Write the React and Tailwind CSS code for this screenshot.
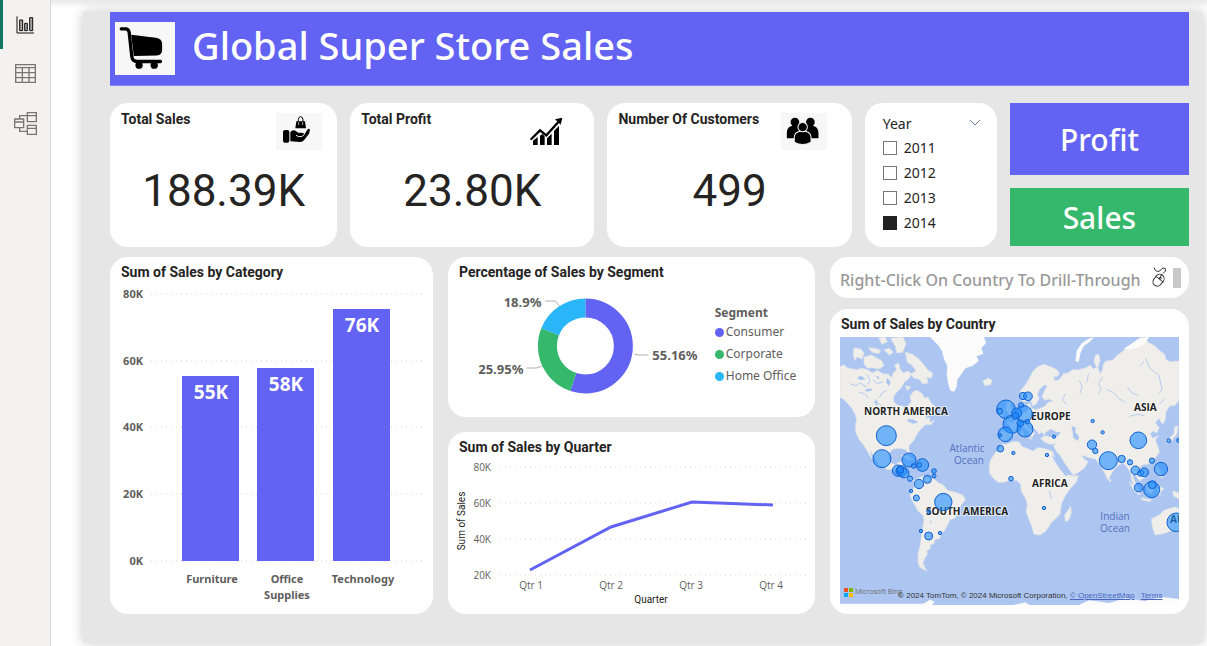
import React, { useState } from "react";

const comic = "font-['Noto_Sans',sans-serif]";
const din = "font-['Roboto',sans-serif]";

function ReportIcon() {
  return (
    <svg viewBox="0 0 54 54" className="h-[18px] w-[18px]" fill="#a3a3a3" stroke="#111" strokeWidth="3" aria-hidden="true">
      <path d="M3 1V51H54" fill="none" />
      <path d="M11 12h9v32h-9zM26 22h8v22h-8zM41 5h9v39h-9z" />
    </svg>
  );
}

function TableIcon() {
  return (
    <svg viewBox="0 0 63 57" className="h-[19px] w-[21px]" fill="none" stroke="#777" strokeWidth="4" aria-hidden="true">
      <path d="M2 2H61V55H2ZM2 11H61M2 26H61M2 41H61M22 11V55M42 11V55" />
    </svg>
  );
}

function ModelIcon() {
  return (
    <svg viewBox="0 0 69 69" className="h-[23px] w-[23px]" fill="none" stroke="#777" strokeWidth="4" aria-hidden="true">
      <path d="M40 2H67V29H40ZM40 11H67M40 40H67V67H40ZM40 49H67M2 21H29V47H2ZM2 30H29M17 20V11H40M17 48V58H40" />
    </svg>
  );
}

function CartIcon() {
  return (
    <svg viewBox="0 0 182 159" className="h-[53px] w-[60px] bg-[#f7f7f7]" role="img" aria-label="Shopping cart">
      <path d="M19 20H32Q41 20 43 31L51 104Q53 119 67 119H138" fill="none" stroke="#000" strokeWidth="10" strokeLinecap="round" />
      <path d="M49 38L124 47Q143 50 143 66V84Q143 99 127 101L57 102Z" />
      <circle cx="73" cy="130" r="11" />
      <circle cx="119" cy="130" r="11" />
    </svg>
  );
}

function HandBagIcon() {
  return (
    <svg viewBox="0 0 138 111" className="h-[37px] w-[46px] bg-[#f7f7f7]" aria-hidden="true">
      <rect x="21" y="51" width="19" height="38" rx="6" />
      <path d="M43 58Q49 49 58 53L67 59H78Q88 61 84 67L94 50Q99 44 102 51L99 62L84 82Q80 87 72 87L43 85Z" />
      <path d="M61 25H87L90 46H58Z" />
      <path d="M67 32V20Q68 11 74 11Q80 11 81 20V32" fill="none" stroke="#000" strokeWidth="3" />
      <path d="M68 27V36M80 27V36" stroke="#f7f7f7" strokeWidth="2" />
      <path d="M60 67L68 71Q78 73 85 65" fill="none" stroke="#f7f7f7" strokeWidth="3" />
    </svg>
  );
}

function GrowthIcon() {
  return (
    <svg viewBox="-22 -14 138 111" className="h-[37px] w-[46px]" aria-hidden="true">
      <path d="M8 69L22 58V82H8ZM29 54L36 49L43 56V82H29ZM50 62L64 48V82H50ZM71 40L86 24V82H71Z" />
      <path d="M3 64L29 38L48 53L82 15" fill="none" stroke="#000" strokeWidth="7" strokeLinecap="round" />
      <path d="M96 0L74 5L91 21Z" />
    </svg>
  );
}

function PeopleIcon() {
  return (
    <svg viewBox="0 0 136 110" className="h-[37px] w-[46px] bg-[#f7f7f7]" aria-hidden="true">
      <circle cx="41" cy="27" r="13" />
      <circle cx="87" cy="27" r="13" />
      <path d="M17 75V58Q18 40 34 38H52L60 75ZM111 75V58Q109 40 94 38H76L68 75Z" />
      <g stroke="#f7f7f7" strokeWidth="3">
        <path d="M39 87V72Q40 58 54 55H74Q88 58 89 72V87Q77 94 64 94Q51 94 39 87Z" />
        <circle cx="64" cy="42" r="14" />
      </g>
    </svg>
  );
}

function MouseIcon() {
  return (
    <svg viewBox="0 0 48 62" className="h-[21px] w-4 shrink-0" fill="none" stroke="#333" strokeWidth="3" aria-hidden="true">
      <path d="M9 1Q12 13 20 13Q28 13 31 6Q36 0 43 4Q47 12 36 19" />
      <rect x="9" y="20" width="26" height="38" rx="13" transform="rotate(38 22 40)" />
      <path d="M14 27L37 45M32 22L25 36" />
      <circle cx="28" cy="33" r="3" />
    </svg>
  );
}

function Card({ title, children, className = "" }) {
  return (
    <section className={`min-w-0 overflow-hidden rounded-[18px] bg-white ${className}`}>
      <h2 className={`px-[11px] pt-[5px] pb-px text-sm leading-5 font-bold text-[#252423] ${din}`}>{title}</h2>
      {children}
    </section>
  );
}

function Kpi({ title, value, icon, inset }) {
  return (
    <section className={`min-w-0 rounded-[18px] bg-white ${din}`}>
      <div className="flex h-[60px] items-start justify-between">
        <h2 className="pt-1.5 pl-[11px] text-sm leading-5 font-bold whitespace-nowrap text-[#252423]">{title}</h2>
        <div className={`pt-2.5 ${inset}`}>{icon}</div>
      </div>
      <p className="text-center text-[44px] leading-[56px] text-[#252423]">{value}</p>
    </section>
  );
}

function YearFilter() {
  const [year, setYear] = useState("2014");
  return (
    <fieldset className={`min-w-0 rounded-[18px] bg-white pt-2.5 pr-4 pl-[18px] text-[#252423] ${comic}`}>
      <div className="flex h-[22px] items-center justify-between text-sm">
        <span>Year</span>
        <button type="button" aria-label="Year options" className="pb-1">
          <svg viewBox="0 0 12 7" className="h-[7px] w-3" fill="none" stroke="#6b7fa3" aria-hidden="true">
            <path d="M1 1L6 6L11 1" />
          </svg>
        </button>
      </div>
      {["2011", "2012", "2013", "2014"].map((y) => (
        <label key={y} className="flex h-[25px] items-center gap-[7px] text-sm">
          <input
            type="checkbox"
            checked={year === y}
            onChange={() => setYear(y)}
            className="h-3.5 w-3.5 appearance-none border border-[#777] bg-white checked:border-[#222] checked:bg-[#222]"
          />
          {y}
        </label>
      ))}
    </fieldset>
  );
}

const bars = [
  { x: 72, top: 91, value: "55K", label: ["Furniture"] },
  { x: 147, top: 83, value: "58K", label: ["Office", "Supplies"] },
  { x: 223, top: 24, value: "76K", label: ["Technology"] },
];

function CategoryChart() {
  return (
    <svg viewBox="0 0 323 329" className={`mt-0.5 block w-full ${comic}`} role="img" aria-label="Sum of sales by category">
      {["80K", "60K", "40K", "20K", "0K"].map((t, i) => {
        const y = [9, 76, 142, 209, 276][i];
        return (
          <g key={t}>
            <path d={`M41 ${y}H313`} stroke="#d4d4d4" strokeDasharray="1 4" />
            <text x="33" y={y + 4} textAnchor="end" className="text-[11px] font-bold" fill="#605e5c">{t}</text>
          </g>
        );
      })}
      {bars.map((b) => (
        <g key={b.value}>
          <rect x={b.x} y={b.top} width="57" height={276 - b.top} fill="#6262f3" />
          <text x={b.x + 29} y={b.top + 23} textAnchor="middle" className="text-[19px] font-bold" fill="#fff">{b.value}</text>
          {b.label.map((line, i) => (
            <text key={line} x={b.x + 30} y={298 + i * 16} textAnchor="middle" className="text-[11px] font-bold" fill="#605e5c">{line}</text>
          ))}
        </g>
      ))}
    </svg>
  );
}

function SegmentChart() {
  const segments = [
    ["#6262f3", "Consumer"],
    ["#35b86b", "Corporate"],
    ["#29b6f9", "Home Office"],
  ];
  return (
    <div className={`mt-0.5 flex h-[132px] text-[#605e5c] ${comic}`}>
      <svg viewBox="0 0 266 132" className="block h-full min-w-0 flex-[266]" role="img" aria-label="Percentage of sales by segment">
        <g fill="none" strokeWidth="19" transform="rotate(-90 137 61)">
          <circle cx="137" cy="61" r="38" pathLength="100" stroke="#6262f3" strokeDasharray="55.16 44.84" />
          <circle cx="137" cy="61" r="38" pathLength="100" stroke="#35b86b" strokeDasharray="25.95 74.05" strokeDashoffset="-55.16" />
          <circle cx="137" cy="61" r="38" pathLength="100" stroke="#29b6f9" strokeDasharray="18.89 81.11" strokeDashoffset="-81.11" />
        </g>
        <path d="M97 16H107L111 21M78 83H88L94 81M186 69L190 70H200" fill="none" stroke="#b3b0ad" />
        <g className="text-[13px] font-bold" fill="#605e5c">
          <text x="93" y="22" textAnchor="end">18.9%</text>
          <text x="75" y="89" textAnchor="end">25.95%</text>
          <text x="204" y="75">55.16%</text>
        </g>
      </svg>
      <div className="min-w-0 flex-[100] pt-[18px] text-xs whitespace-nowrap">
        <p className="h-[18px] leading-5 font-bold">Segment</p>
        <ul>
          {segments.map(([color, name]) => (
            <li key={name} className="flex h-[22px] items-center gap-0.5 leading-5">
              <svg viewBox="0 0 10 10" className="h-[9px] w-[9px] shrink-0" aria-hidden="true">
                <circle cx="5" cy="5" r="5" fill={color} />
              </svg>
              {name}
            </li>
          ))}
        </ul>
      </div>
    </div>
  );
}

function QuarterChart() {
  return (
    <svg viewBox="0 0 367 154" className="mt-0.5 block w-full font-['Open_Sans',sans-serif]" role="img" aria-label="Sum of sales by quarter">
      {["80K", "60K", "40K", "20K"].map((t, i) => (
        <g key={t}>
          <path d={`M52 ${7 + i * 36}H358`} stroke="#d4d4d4" strokeDasharray="1 4" />
          <text x="43" y={11 + i * 36} textAnchor="end" className="text-[10px]" fill="#605e5c">{t}</text>
        </g>
      ))}
      <path d="M82 110L163 67L244 42L325 45" fill="none" stroke="#6262f3" strokeWidth="3" />
      {["Qtr 1", "Qtr 2", "Qtr 3", "Qtr 4"].map((t, i) => (
        <text key={t} x={83 + i * 80} y="129" textAnchor="middle" className="text-[10px]" fill="#605e5c">{t}</text>
      ))}
      <g className={`text-[10px] ${din}`} fill="#252423" textAnchor="middle">
        <text x="203" y="143">Quarter</text>
        <text transform="translate(17 61) rotate(-90)">Sum of Sales</text>
      </g>
    </svg>
  );
}

const land = [
  // North and Central America
  "M0 88L14 84L20 92L35 95L50 98L66 94L84 99L98 108L112 100L128 110L146 112L155 122L160 108L170 98L164 84L176 78L180 96L190 108L204 102L214 110L206 126L194 134L184 152L170 166L160 180L162 196L172 204L190 208L196 222L204 224L204 206L214 194L210 178L220 164L232 160L246 170L254 184L264 180L272 196L284 208L290 222L274 232L262 236L254 246L268 242L270 256L284 250L272 264L258 262L246 272L236 284L226 300L222 310L208 324L206 334L212 350L208 354L198 338L180 334L160 336L148 346L146 362L152 378L166 384L176 376L190 374L184 390L178 396L196 400L202 418L216 424L224 432L214 432L200 426L188 414L172 404L158 396L144 398L128 390L114 382L104 362L90 338L94 356L102 372L92 360L82 342L72 326L58 308L48 288L46 266L50 246L44 228L34 212L22 198L10 186L0 182Z",
  // South America
  "M222 436L236 422L250 418L262 420L282 426L296 438L310 444L322 460L346 466L368 474L376 488L362 506L354 524L344 544L330 548L324 562L314 580L302 592L300 604L284 608L282 620L270 624L272 634L260 642L262 652L254 664L248 680L256 688L240 692L234 676L234 652L240 628L244 600L248 574L252 548L248 534L234 522L222 500L212 482L212 466L222 452Z",
  "M250 688L262 702L252 698L242 692Z",
  // Europe and Asia
  "M482 312L480 294L484 282L504 284L512 286L512 268L500 256L518 256L532 244L546 232L556 226L564 218L560 204L570 200L574 214L588 218L606 212L616 206L624 196L640 192L626 186L614 190L606 178L614 160L622 146L612 144L598 158L592 174L598 184L588 202L578 206L572 188L560 194L546 192L538 176L542 160L556 144L568 124L578 104L592 90L612 82L628 88L644 94L658 106L654 118L640 120L646 132L660 126L670 110L684 108L698 98L718 98L738 92L752 84L758 96L770 92L762 74L766 54L776 52L780 70L774 92L780 110L788 98L790 80L800 72L818 70L830 56L852 40L876 26L892 12L914 6L928 18L946 28L960 42L974 52L978 68L992 74L1017 72V190L1004 206L990 206L978 224L976 248L968 262L956 244L946 258L958 272L950 288L940 282L930 290L938 304L956 296L946 308L954 330L958 346L944 366L926 380L908 384L898 392L912 408L914 420L900 432L892 424L884 408L878 418L888 444L898 462L888 452L876 432L872 408L862 392L850 378L836 384L820 400L810 418L804 430L794 408L784 388L774 376L766 366L746 362L726 354L730 364L744 374L734 392L716 406L700 414L688 398L674 378L662 358L648 342L640 326L648 320L628 322L612 314L602 304L614 296L606 284L598 292L588 280L576 268L566 262L558 260L572 276L584 288L576 302L568 286L552 272L540 266L526 278L514 298L498 310Z",
  // Africa
  "M484 322L500 322L518 314L536 314L546 328L560 334L578 342L594 332L610 334L630 340L638 344L644 362L654 382L664 400L674 412L698 416L716 416L708 436L690 456L676 476L666 496L662 514L660 532L646 546L634 556L626 570L616 584L600 594L582 592L576 570L568 550L558 524L562 502L556 482L544 464L542 442L530 430L510 430L492 436L474 436L460 424L448 408L448 388L452 368L464 350L476 338Z",
  "M692 508L694 528L686 550L676 554L674 534L684 520Z",
  // Great Britain, Ireland, Iceland, Mediterranean islands
  "M500 196L514 194L512 212L524 228L520 244L502 250L506 232L498 220Z",
  "M474 218L492 216L490 236L474 238Z",
  "M428 132L444 124L456 130L452 142L436 147Z",
  "M544 284L550 282L550 298L544 298ZM566 302L574 302L572 308Z",
  // Canadian archipelago
  "M42 32L62 36L72 48L66 66L52 60L44 70L40 54ZM72 60L94 54L112 64L126 72L132 86L118 96L98 92L82 94L72 80ZM86 32L106 34L122 40L116 50L96 46ZM132 38L148 34L160 46L148 54ZM152 4L188 0L198 20L188 46L170 48L166 28ZM116 2L136 0L142 14L126 22ZM196 46L218 52L236 66L252 84L264 100L278 108L274 124L260 120L264 138L248 140L236 126L222 124L212 112L228 102L216 84L202 76ZM196 146L212 150L202 160Z",
  // Caribbean
  "M182 356L202 356L220 370L204 368ZM228 376L250 382L240 388L226 386Z",
  // Indonesia, Philippines, Japan
  "M868 434L884 448L902 468L896 474L880 458ZM904 482L934 488L930 494L904 488ZM918 440L938 432L946 448L936 470L920 464ZM952 456L964 450L972 456L960 464L962 474L954 472ZM948 384L960 398L968 424L956 416L946 400ZM998 462L1017 468V486L1002 478ZM976 310L990 302L1002 290L1004 268L1014 268L1010 292L996 310L982 320Z",
  "M806 422L814 430L810 436Z",
  // Australia
  "M934 546L958 534L972 520L990 514L1006 510L1017 516V584L998 580L970 590L944 594L938 572Z",
];

const snow = [
  "M270 0H432L438 18L424 34L430 50L410 58L416 72L398 86L376 94L364 112L352 128L350 150L342 164L330 160L324 138L320 112L322 88L312 66L306 42L294 24Z",
  "M706 72L710 42L724 20L744 6L762 0L750 14L732 26L722 46L716 76Z",
  "M850 36L874 20L900 2L928 0L912 22L894 32L872 38Z",
  "M0 804L0 800H250L270 788L284 794L276 804ZM520 804L556 796L568 804ZM716 804L748 790L808 798L856 784L914 792L966 780L1017 786V804Z",
];

const water = [
  "M618 286L632 276L648 284L662 286L654 298L630 300L612 294Z",
  "M694 266L708 272L706 286L718 300L712 312L700 302L698 284Z",
  "M634 354L648 364L664 388L676 404L684 418L676 416L660 396L646 376Z",
  "M202 246L222 248L234 256L220 260L204 254Z",
  "M50 122L64 116L76 126L62 130ZM74 158L92 154L98 160L80 164ZM106 116L118 120L116 128ZM142 122L152 136L146 148L138 134ZM108 186L114 198L110 208L104 196Z",
];

const rivers =
  "M30 140L48 146L60 138L80 150M58 166L78 172L84 184M98 128L112 140L128 134M100 196L120 202L132 214M80 112L90 128L84 142M140 160L126 168L118 182M718 130L726 148L720 170M788 120L776 140L784 158L774 170M800 158L820 166L838 186L856 196M862 150L876 168L896 176M916 62L930 94L956 114L966 154L958 170M868 238L892 232L914 236M960 200L974 184M676 170L668 188L680 204M634 486L628 462M310 424L316 432M270 550L274 560M746 110L740 136M900 88L912 72";

const bubbles = [
  [139, 296, 30], [126, 365, 27], [207, 369, 21], [247, 384, 19], [238, 384, 7], [221, 387, 7], [282, 402, 7], [282, 417, 6],
  [174, 401, 17], [184, 402, 16], [192, 408, 15], [181, 399, 10], [210, 425, 8], [262, 427, 12], [237, 441, 14], [213, 462, 5], [229, 483, 9],
  [310, 495, 26], [266, 523, 6], [243, 582, 5], [300, 588, 5], [266, 597, 12],
  [498, 217, 28], [479, 223, 9], [549, 177, 11], [564, 178, 13], [543, 205, 8], [552, 231, 25], [516, 262, 27], [530, 228, 15],
  [526, 237, 10], [555, 276, 24], [541, 259, 10], [562, 254, 7], [496, 292, 22], [480, 295, 5], [481, 335, 10], [520, 348, 5],
  [513, 425, 7], [612, 513, 5], [621, 354, 5], [642, 299, 5], [758, 252, 5], [788, 286, 5], [756, 323, 14], [766, 342, 8],
  [805, 371, 27], [895, 310, 25], [845, 366, 11], [870, 376, 8], [886, 400, 13], [902, 409, 9], [913, 406, 13], [936, 371, 8],
  [963, 396, 20], [896, 452, 13], [935, 458, 24], [937, 443, 12], [986, 311, 6], [1016, 310, 6], [1009, 556, 28],
];

function CountryMap() {
  return (
    <div className="relative mx-2.5 mt-0.5 mb-[9px] font-['Open_Sans',sans-serif]">
      <svg viewBox="0 0 339 268" className="block w-full bg-[#adc6f1]" role="img" aria-label="World map of sales by country">
        <g transform="scale(0.33333)">
          <g fill="#efeeea" stroke="#dfe3e8" strokeWidth="2" strokeLinejoin="round">
            {land.map((d) => <path key={d} d={d} />)}
          </g>
          <g fill="#fbfbfb">{snow.map((d) => <path key={d} d={d} />)}</g>
          <g fill="#adc6f1">{water.map((d) => <path key={d} d={d} />)}</g>
          <path d={rivers} fill="none" stroke="#b5ccee" strokeWidth="3" />
        </g>
        <g className="text-[10px] font-bold" fill="#222" stroke="#fff" strokeOpacity="0.6" strokeWidth="2" paintOrder="stroke">
          <text x="24" y="78">NORTH AMERICA</text>
          <text x="86" y="178">SOUTH AMERICA</text>
          <text x="191" y="83">EUROPE</text>
          <text x="294" y="74">ASIA</text>
          <text x="192" y="150">AFRICA</text>
          <text x="330" y="186">AU</text>
        </g>
        <g className="text-[10px]" fill="#5470c0" textAnchor="middle">
          <text x="127" y="115">Atlantic</text>
          <text x="129" y="127">Ocean</text>
          <text x="275" y="183">Indian</text>
          <text x="275" y="195">Ocean</text>
        </g>
        <g transform="scale(0.33333)" fill="#1a8cff" fillOpacity="0.6" stroke="#1260d0" strokeWidth="3">
          {bubbles.map(([x, y, r]) => <circle key={`${x}-${y}`} cx={x} cy={y} r={r} />)}
        </g>
      </svg>
      <div className="absolute inset-x-1 bottom-1 flex items-end whitespace-nowrap">
        <span className="flex items-center gap-0.5 pb-1 text-[7px] leading-[10px] text-[#6b6b6b]">
          <svg viewBox="0 0 9 9" className="h-[9px] w-[9px]" aria-hidden="true">
            <path d="M0 0h4v4H0z" fill="#f25022" />
            <path d="M5 0h4v4H5z" fill="#7fba00" />
            <path d="M0 5h4v4H0z" fill="#00a4ef" />
            <path d="M5 5h4v4H5z" fill="#ffb900" />
          </svg>
          Microsoft Bing
        </span>
        <span className="-ml-1 font-['Liberation_Sans',sans-serif] text-[8px] leading-[10px] text-[#333]">
          © 2024 TomTom, © 2024 Microsoft Corporation,{" "}
          <a href="#osm" className="text-[#4a67c0] underline">© OpenStreetMap</a>{" "}
          <a href="#terms" className="ml-1 text-[#4a67c0] underline">Terms</a>
        </span>
      </div>
    </div>
  );
}

export default function App() {
  return (
    <div className="flex min-h-screen bg-white">
      <nav className="flex w-[51px] shrink-0 flex-col border-r border-[#d8d8d8] bg-[#f3f2f1]" aria-label="Views">
        <button type="button" aria-label="Report view" className="flex h-[49px] items-center justify-center border-l-[3px] border-[#117865] pr-[3px]">
          <ReportIcon />
        </button>
        <button type="button" aria-label="Table view" className="flex h-12 items-center justify-center">
          <TableIcon />
        </button>
        <button type="button" aria-label="Model view" className="flex h-[52px] items-center justify-center">
          <ModelIcon />
        </button>
      </nav>
      <main className="min-w-0 flex-1 overflow-hidden bg-linear-to-b from-[#e8e8e8] from-0% to-white to-[8px] pt-3 pr-1 pb-[3px] pl-8">
        <div className="bg-[#e6e6e6] pr-3.5 pb-[29px] pl-[27px] shadow-[0_0_12px_rgba(0,0,0,0.22)]">
          <header className="flex h-[74px] items-center gap-[17px] border-b border-[#8a8af5] bg-[#6262f3] pl-[5px]">
            <CartIcon />
            <h1 className={`pb-2 text-[38px] leading-[48px] font-medium text-white ${comic}`}>Global Super Store Sales</h1>
          </header>

          <div className="mt-[17px] grid grid-cols-[minmax(0,227fr)_minmax(0,244fr)_minmax(0,244fr)_minmax(0,132fr)_minmax(0,179fr)] gap-[13px]">
            <Kpi title="Total Sales" value="188.39K" icon={<HandBagIcon />} inset="pr-[15px]" />
            <Kpi title="Total Profit" value="23.80K" icon={<GrowthIcon />} inset="pr-[25px]" />
            <Kpi title="Number Of Customers" value="499" icon={<PeopleIcon />} inset="pr-[25px]" />
            <YearFilter />
            <div className={`flex h-36 flex-col gap-[13px] text-[30px] font-medium text-white ${comic}`}>
              <button type="button" className="h-[72px] bg-[#6262f3]">Profit</button>
              <button type="button" className="h-[58px] bg-[#35b86b]">Sales</button>
            </div>
          </div>

          <div className="mt-2.5 grid grid-cols-[minmax(0,323fr)_minmax(0,367fr)_minmax(0,359fr)] gap-[15px]">
            <Card title="Sum of Sales by Category">
              <CategoryChart />
            </Card>
            <div className="flex min-w-0 flex-col gap-[15px]">
              <Card title="Percentage of Sales by Segment">
                <SegmentChart />
              </Card>
              <Card title="Sum of Sales by Quarter" className="flex-1">
                <QuarterChart />
              </Card>
            </div>
            <div className="flex min-w-0 flex-col gap-[11px]">
              <div className={`flex h-[41px] items-center rounded-[18px] bg-white pr-2 pl-2.5 text-base font-medium text-[#999] ${comic}`}>
                <p className="min-w-0 flex-1 overflow-hidden pt-1 whitespace-nowrap">Right-Click On Country To Drill-Through</p>
                <MouseIcon />
                <span className="ml-1.5 h-5 w-2 shrink-0 bg-[#c8c8c8]" />
              </div>
              <Card title="Sum of Sales by Country" className="flex-1">
                <CountryMap />
              </Card>
            </div>
          </div>
        </div>
      </main>
    </div>
  );
}
